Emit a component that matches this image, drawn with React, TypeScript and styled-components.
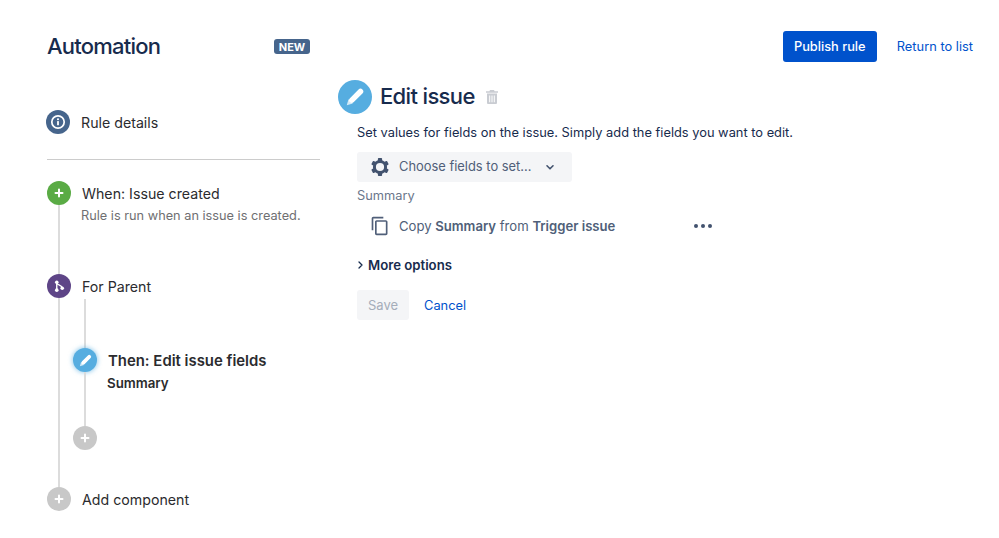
import React from "react";
import styled, { createGlobalStyle } from "styled-components";
import { MdContentCopy } from "react-icons/md";

const Global = createGlobalStyle`
  html, body { margin: 0; padding: 0; background: #fff; }
  body { font-family: Inter, "Liberation Sans", sans-serif; color: #172b4d; -webkit-font-smoothing: antialiased; }
`;

const Page = styled.div`
  width: 999px;
  height: 538px;
  overflow: hidden;
  display: flex;
  box-sizing: border-box;
  padding: 31px 26px 0 47px;
  gap: 18px;
`;

const Sidebar = styled.aside`
  width: 273px;
  flex: none;
  display: flex;
  flex-direction: column;
`;

const BrandRow = styled.div`
  height: 31px;
  display: flex;
  align-items: center;
  justify-content: space-between;
  padding-right: 10px;
`;

const BrandTitle = styled.h1`
  margin: 0 0 1px;
  font-size: 22px;
  font-weight: 500;
  letter-spacing: -0.78px;
  color: #172b4d;
`;

const Badge = styled.span`
  width: 36px;
  height: 15px;
  border-radius: 3px;
  background: #46658c;
  color: #fff;
  font-size: 11px;
  font-weight: 700;
  display: flex;
  align-items: center;
  justify-content: center;
`;

const DetailsRow = styled.div`
  margin: 48px 0 0 -1px;
  height: 24px;
  display: flex;
  align-items: center;
  gap: 11px;
`;

const StepLabel = styled.span<{ $bold?: boolean; $inset?: number }>`
  font-size: ${(p) => (p.$bold ? 14.9 : 14.2)}px;
  line-height: 26px;
  height: 24px;
  display: block;
  white-space: nowrap;
  color: #2b2b2e;
  font-weight: ${(p) => (p.$bold ? 600 : 400)};
  padding-left: ${(p) => p.$inset ?? 0}px;
`;

const Divider = styled.hr`
  margin: 25px 0 21px;
  border: 0;
  height: 1px;
  background: #ccc;
`;

const Tree = styled.div`
  display: flex;
  flex-direction: column;
`;

const Step = styled.div<{ $height?: number }>`
  display: flex;
  min-height: ${(p) => p.$height ?? 24}px;
`;

const Rail = styled.div`
  width: 24px;
  flex: none;
  display: flex;
  flex-direction: column;
  align-items: center;
`;

const Connector = styled.div<{ $height?: number }>`
  width: 2px;
  background: #dcdcdc;
  flex: ${(p) => (p.$height ? "none" : "1")};
  height: ${(p) => (p.$height ? `${p.$height}px` : "auto")};
`;

const Node = styled.div<{ $color: string; $size?: number; $glow?: boolean }>`
  width: ${(p) => p.$size ?? 24}px;
  height: ${(p) => p.$size ?? 24}px;
  border-radius: 50%;
  flex: none;
  display: flex;
  align-items: center;
  justify-content: center;
  color: #fff;
  background: ${(p) => p.$color};
  box-shadow: ${(p) => (p.$glow ? "0 0 4px 1px rgba(86,173,224,.55)" : "none")};
`;

const StepBody = styled.div`
  flex: 1;
  min-width: 0;
  display: flex;
  flex-direction: column;
`;

const Hint = styled.span`
  font-size: 12.75px;
  line-height: 20px;
  margin-left: 10px;
  margin-top: 1px;
  color: #6f6f72;
  white-space: nowrap;
`;

const Nested = styled.div`
  margin: 1px 0 0 2px;
  display: flex;
  flex-direction: column;
`;

const NestedHint = styled.span`
  font-size: 13.3px;
  font-weight: 600;
  line-height: 20px;
  margin: 1px 0 0 10px;
  color: #2b2b2e;
`;

const Main = styled.main`
  flex: 1;
  min-width: 0;
  display: flex;
  flex-direction: column;
`;

const Actions = styled.div`
  height: 31px;
  display: flex;
  justify-content: flex-end;
  align-items: center;
  gap: 20px;
`;

const PrimaryButton = styled.button`
  width: 94px;
  height: 31px;
  border: 0;
  border-radius: 3px;
  background: #0052cc;
  color: #fff;
  font: 500 12.8px Inter, sans-serif;
  padding: 0;
`;

const TextLink = styled.a`
  color: #0052cc;
  font-size: 12.85px;
  white-space: nowrap;
`;

const EditorHead = styled.div`
  margin-top: 18px;
  height: 34px;
  display: flex;
  align-items: center;
  gap: 8px;
`;

const EditorTitle = styled.h2`
  margin: 0 0 3px;
  font-size: 22px;
  font-weight: 500;
  letter-spacing: -0.65px;
  color: #172b4d;
`;

const TrashWrap = styled.span`
  display: flex;
  margin-left: 3px;
`;

const EditorBody = styled.div`
  padding: 9px 0 0 19px;
  display: flex;
  flex-direction: column;
  align-items: flex-start;
`;

const Description = styled.p`
  margin: 0;
  font-size: 12.85px;
  line-height: 20px;
  color: #172b4d;
  white-space: nowrap;
`;

const FieldPicker = styled.div`
  margin-top: 9px;
  width: 215px;
  height: 30px;
  box-sizing: border-box;
  padding: 0 17px 0 13px;
  border-radius: 3px;
  background: #f4f5f7;
  display: flex;
  align-items: center;
  color: #505f79;
`;

const PickerText = styled.span`
  flex: 1;
  margin: 0 0 1px 9px;
  white-space: nowrap;
  font-size: 12.9px;
`;

const FieldLabel = styled.div`
  margin-top: 4px;
  font-size: 12.8px;
  line-height: 20px;
  color: #6b778c;
`;

const CopyRow = styled.div`
  margin-top: 10px;
  width: 355px;
  height: 20px;
  box-sizing: border-box;
  padding-left: 13px;
  display: flex;
  align-items: center;
  color: #505f79;
`;

const CopyText = styled.span`
  flex: 1;
  margin-left: 9px;
  font-size: 13.12px;
  white-space: nowrap;
  b { font-weight: 600; }
`;

const MoreRow = styled.div`
  margin-top: 19px;
  height: 20px;
  display: flex;
  align-items: center;
  gap: 5px;
  padding-left: 1px;
`;

const MoreLabel = styled.span`
  font-size: 13.2px;
  font-weight: 600;
  color: #172b4d;
`;

const FormButtons = styled.div`
  margin-top: 15px;
  display: flex;
  align-items: center;
  gap: 15px;
`;

const SaveButton = styled.button`
  width: 52px;
  height: 30px;
  border: 0;
  border-radius: 3px;
  background: #f4f5f7;
  color: #a5adba;
  font: 400 13px Inter, sans-serif;
  padding: 0;
`;

const Plus = () => (
  <svg width="10" height="10" viewBox="0 0 10 10" aria-hidden="true">
    <path d="M5 1.5v7M1.5 5h7" stroke="currentColor" strokeWidth="2" strokeLinecap="round" />
  </svg>
);

const Info = () => (
  <svg width="16" height="16" viewBox="0 0 16 16" aria-hidden="true">
    <circle cx="8" cy="8" r="6.2" fill="none" stroke="currentColor" strokeWidth="1.7" />
    <circle cx="8" cy="5.2" r="1.05" fill="currentColor" />
    <rect x="7.1" y="7" width="1.8" height="4.3" rx=".6" fill="currentColor" />
  </svg>
);

const Branch = () => (
  <svg width="11" height="12.5" viewBox="0 0 14 16" aria-hidden="true">
    <path d="M3.5 3v10M3.5 3.5C4 7 10 6 10.5 10" fill="none" stroke="currentColor" strokeWidth="1.8" />
    <circle cx="3.5" cy="3" r="2.3" fill="currentColor" />
    <circle cx="3.5" cy="13" r="2.3" fill="currentColor" />
    <circle cx="10.5" cy="10.5" r="2.3" fill="currentColor" />
  </svg>
);

const Pencil = ({ size }: { size: number }) => (
  <svg width={size} height={size} viewBox="0 0 24 24" aria-hidden="true">
    <path d="M8.6 15.4 18 6" stroke="#fff" strokeWidth="6" strokeLinecap="round" />
    <path d="M3 21l1.9-6.6 4.7 4.7L3 21z" fill="#fff" fillOpacity=".75" />
  </svg>
);

const Trash = () => (
  <svg width="12" height="14" viewBox="0 0 12 14" aria-hidden="true">
    <path
      fill="#c9ccd2"
      d="M4 0h4l.6 1.2H12v1.6H0V1.2h3.4L4 0zM1 3.6h10V13a1 1 0 0 1-1 1H2a1 1 0 0 1-1-1V3.6zm2.2 1.8v6.8h1V5.4h-1zm2.3 0v6.8h1V5.4h-1zm2.3 0v6.8h1V5.4h-1z"
    />
  </svg>
);

const Gear = () => (
  <svg width="20" height="20" viewBox="0 0 20 20" aria-hidden="true">
    <circle cx="10" cy="10" r="5.6" fill="none" stroke="#42526e" strokeWidth="3" />
    {[0, 60, 120, 180, 240, 300].map((a) => (
      <rect key={a} x="7.9" y="1" width="4.2" height="4" rx=".8" fill="#42526e" transform={`rotate(${a} 10 10)`} />
    ))}
  </svg>
);

const ChevronDown = () => (
  <svg width="10" height="7" viewBox="0 0 10 7" aria-hidden="true">
    <path d="M2 1.8 5 4.8l3-3" fill="none" stroke="#42526e" strokeWidth="1.6" strokeLinecap="round" strokeLinejoin="round" />
  </svg>
);

const ChevronRight = () => (
  <svg width="5" height="8" viewBox="0 0 5 8" aria-hidden="true">
    <path d="M1 1l3 3-3 3" fill="none" stroke="#172b4d" strokeWidth="1.3" strokeLinecap="round" strokeLinejoin="round" />
  </svg>
);

const Dots = () => (
  <svg width="18" height="4" viewBox="0 0 18 4" aria-hidden="true">
    <circle cx="2" cy="2" r="2" fill="#42526e" />
    <circle cx="9" cy="2" r="2" fill="#42526e" />
    <circle cx="16" cy="2" r="2" fill="#42526e" />
  </svg>
);

export default function App() {
  return (
    <>
      <Global />
      <Page>
        <Sidebar>
          <BrandRow>
            <BrandTitle>Automation</BrandTitle>
            <Badge>NEW</Badge>
          </BrandRow>
          <DetailsRow>
            <Node $color="#46658c"><Info /></Node>
            <StepLabel>Rule details</StepLabel>
          </DetailsRow>
          <Divider />
          <Tree>
            <Step $height={93}>
              <Rail>
                <Node $color="#5aab45"><Plus /></Node>
                <Connector />
              </Rail>
              <StepBody>
                <StepLabel $inset={11}>When: Issue created</StepLabel>
                <Hint>Rule is run when an issue is created.</Hint>
              </StepBody>
            </Step>
            <Step $height={213}>
              <Rail>
                <Node $color="#5e4587"><Branch /></Node>
                <Connector />
              </Rail>
              <StepBody>
                <StepLabel $inset={11}>For Parent</StepLabel>
                <Nested>
                  <Rail>
                    <Connector $height={49} />
                  </Rail>
                  <Step $height={78}>
                    <Rail>
                      <Node $color="#56ade0" $glow><Pencil size={15} /></Node>
                      <Connector />
                    </Rail>
                    <StepBody>
                      <StepLabel $bold $inset={11}>Then: Edit issue fields</StepLabel>
                      <NestedHint>Summary</NestedHint>
                    </StepBody>
                  </Step>
                  <Step>
                    <Rail>
                      <Node $color="#c8c8c8"><Plus /></Node>
                    </Rail>
                  </Step>
                </Nested>
              </StepBody>
            </Step>
            <Step>
              <Rail>
                <Node $color="#c8c8c8"><Plus /></Node>
              </Rail>
              <StepBody>
                <StepLabel $inset={11}>Add component</StepLabel>
              </StepBody>
            </Step>
          </Tree>
        </Sidebar>
        <Main>
          <Actions>
            <PrimaryButton>Publish rule</PrimaryButton>
            <TextLink>Return to list</TextLink>
          </Actions>
          <EditorHead>
            <Node $color="#56ade0" $size={34}><Pencil size={22} /></Node>
            <EditorTitle>Edit issue</EditorTitle>
            <TrashWrap><Trash /></TrashWrap>
          </EditorHead>
          <EditorBody>
            <Description>Set values for fields on the issue. Simply add the fields you want to edit.</Description>
            <FieldPicker>
              <Gear />
              <PickerText>Choose fields to set...</PickerText>
              <ChevronDown />
            </FieldPicker>
            <FieldLabel>Summary</FieldLabel>
            <CopyRow>
              <MdContentCopy size={20} color="#505f79" />
              <CopyText>Copy <b>Summary</b> from <b>Trigger issue</b></CopyText>
              <Dots />
            </CopyRow>
            <MoreRow>
              <ChevronRight />
              <MoreLabel>More options</MoreLabel>
            </MoreRow>
            <FormButtons>
              <SaveButton disabled>Save</SaveButton>
              <TextLink>Cancel</TextLink>
            </FormButtons>
          </EditorBody>
        </Main>
      </Page>
    </>
  );
}
